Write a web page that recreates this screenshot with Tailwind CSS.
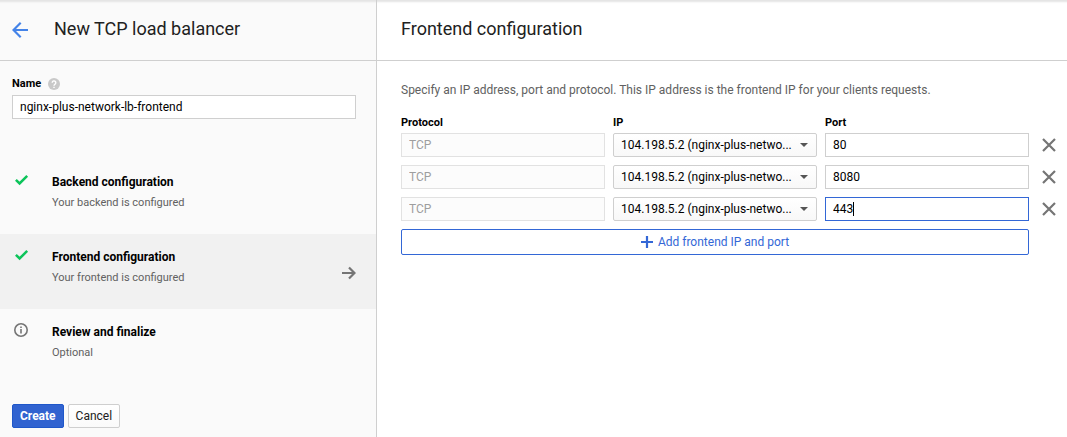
<!DOCTYPE html>
<html lang="en">
<head>
<meta charset="utf-8">
<meta name="viewport" content="width=device-width, initial-scale=1">
<title>New TCP load balancer</title>
<script src="https://cdn.jsdelivr.net/npm/@tailwindcss/browser@4"></script>
</head>
<body class="flex min-h-screen bg-white font-[Roboto,sans-serif] text-[12px] leading-4 text-black shadow-[inset_0_4px_2px_-2px_#e4e4e4]">

<aside class="flex w-[377px] shrink-0 flex-col border-r border-[#cfcfcf] bg-[#fafafa] shadow-[inset_0_4px_2px_-2px_#e4e4e4]">
  <header class="flex h-[61px] items-center border-b border-[#cfcfcf] pb-[2px] pl-3">
    <button type="button" aria-label="Back" class="mt-[2px] w-[42px]">
      <svg class="h-4 w-4" viewBox="0 0 16 16" fill="none" stroke="#4483e8" stroke-width="2.200"><path d="M16 8H1.500M8.700.8 1.500 8l7.200 7.200"/></svg>
    </button>
    <h1 class="text-[18px] leading-6 text-[#212121]">New TCP load balancer</h1>
  </header>

  <form class="flex grow flex-col">
    <div class="px-3 pt-[15px]">
      <div class="flex h-4 items-center gap-[7px]">
        <label for="name" class="text-[11px] font-bold">Name</label>
        <svg class="h-3 w-3" viewBox="0 0 12 12"><circle cx="6" cy="6" r="6" fill="#c9c9c9"/><path d="M4.200 4.700a1.800 1.800 0 1 1 2.800 1.500C6.300 6.700 6 6.900 6 7.700M6 8.700v1.200" fill="none" stroke="#fff" stroke-width="1.400"/></svg>
      </div>
      <input id="name" value="nginx-plus-network-lb-frontend" class="mt-[3px] h-6 w-[calc(100%-8px)] border border-[#cfcfcf] bg-white px-[7px] outline-none">
    </div>

    <ol class="mt-10">
      <li class="flex h-[75px] pt-[15px] pl-[14px]">
        <svg class="h-4 w-[38px] shrink-0" viewBox="0 0 38 16" fill="none" stroke="#0cc45a" stroke-width="2.500"><path d="m1.900 5.900 3.700 3.600 7.600-7.600"/></svg>
        <div><h2 class="font-bold">Backend configuration</h2><p class="mt-[5px] text-[11px] text-[#616161]">Your backend is configured</p></div>
      </li>
      <li class="flex h-[75px] bg-[#f1f1f1] pt-[15px] pr-5 pl-[14px]" aria-current="step">
        <svg class="h-4 w-[38px] shrink-0" viewBox="0 0 38 16" fill="none" stroke="#0cc45a" stroke-width="2.500"><path d="m1.900 5.900 3.700 3.600 7.600-7.600"/></svg>
        <div class="grow"><h2 class="font-bold">Frontend configuration</h2><p class="mt-[5px] text-[11px] text-[#616161]">Your frontend is configured</p></div>
        <svg class="mt-4 h-4 w-[14px]" viewBox="0 0 14 16" fill="none" stroke="#757575" stroke-width="2.200"><path d="M0 8h12.500M7 2.500 12.500 8 7 13.500"/></svg>
      </li>
      <li class="flex h-[75px] pt-[14px] pl-[14px]">
        <svg class="h-4 w-[38px] shrink-0" viewBox="0 0 38 16" fill="none" stroke="#757575" stroke-width="1.600"><circle cx="7" cy="7" r="6.200"/><path d="M7 6v4.500M7 3.600v1.500"/></svg>
        <div class="mt-px"><h2 class="font-bold">Review and finalize</h2><p class="mt-[5px] text-[11px] text-[#616161]">Optional</p></div>
      </li>
    </ol>

    <div class="mt-5 flex gap-1 px-3">
      <button type="submit" class="h-6 rounded-xs border border-[#1f57c9] bg-[#3163d0] px-[7px] font-bold text-white">Create</button>
      <button type="button" class="h-6 rounded-xs border border-[#cfcfcf] bg-linear-to-b from-white to-[#fafafa] px-[7px] text-[#212121]">Cancel</button>
    </div>
  </form>
</aside>

<main class="min-w-0 grow">
  <header class="flex h-[61px] items-center border-b border-[#cfcfcf] px-6 pb-[2px]">
    <h1 class="text-[18px] leading-6 text-[#212121]">Frontend configuration</h1>
  </header>
  <form class="pt-[21px] pr-[6px] pl-6">
    <p class="text-[#616161]">Specify an IP address, port and protocol. This IP address is the frontend IP for your clients requests.</p>
    <div class="mt-[17px] grid grid-cols-[1fr_1fr_1fr_24px] gap-2">
      <div id="h-protocol" class="-mb-[6px] text-[11px] font-bold">Protocol</div>
      <div id="h-ip" class="-mb-[6px] text-[11px] font-bold">IP</div>
      <div id="h-port" class="-mb-[6px] text-[11px] font-bold">Port</div>
      <div></div>

      <input aria-labelledby="h-protocol" disabled value="TCP" class="h-6 min-w-0 border border-[#e2e2e2] bg-[#fcfcfc] px-[7px] text-[#9e9e9e]">
      <div class="relative">
        <select aria-labelledby="h-ip" class="h-6 w-full appearance-none rounded-xs border border-[#cfcfcf] bg-linear-to-b from-white to-[#f8f8f8] pr-5 pl-[7px]"><option>104.198.5.2 (nginx-plus-netwo...</option></select>
        <svg class="pointer-events-none absolute top-[10px] right-[9px] h-1 w-2" viewBox="0 0 8 4"><path d="M0 0h8L4 4z" fill="#555"/></svg>
      </div>
      <input aria-labelledby="h-port" value="80" class="h-6 min-w-0 border border-[#cfcfcf] px-[7px] outline-none">
      <button type="button" aria-label="Remove" class="flex h-6 items-center justify-center"><svg class="h-3 w-3 overflow-visible" viewBox="0 0 12 12" stroke="#757575" stroke-width="2.200"><path d="m0 0 12 12M12 0 0 12"/></svg></button>

      <input aria-labelledby="h-protocol" disabled value="TCP" class="h-6 min-w-0 border border-[#e2e2e2] bg-[#fcfcfc] px-[7px] text-[#9e9e9e]">
      <div class="relative">
        <select aria-labelledby="h-ip" class="h-6 w-full appearance-none rounded-xs border border-[#cfcfcf] bg-linear-to-b from-white to-[#f8f8f8] pr-5 pl-[7px]"><option>104.198.5.2 (nginx-plus-netwo...</option></select>
        <svg class="pointer-events-none absolute top-[10px] right-[9px] h-1 w-2" viewBox="0 0 8 4"><path d="M0 0h8L4 4z" fill="#555"/></svg>
      </div>
      <input aria-labelledby="h-port" value="8080" class="h-6 min-w-0 border border-[#cfcfcf] px-[7px] outline-none">
      <button type="button" aria-label="Remove" class="flex h-6 items-center justify-center"><svg class="h-3 w-3 overflow-visible" viewBox="0 0 12 12" stroke="#757575" stroke-width="2.200"><path d="m0 0 12 12M12 0 0 12"/></svg></button>

      <input aria-labelledby="h-protocol" disabled value="TCP" class="h-6 min-w-0 border border-[#e2e2e2] bg-[#fcfcfc] px-[7px] text-[#9e9e9e]">
      <div class="relative">
        <select aria-labelledby="h-ip" class="h-6 w-full appearance-none rounded-xs border border-[#cfcfcf] bg-linear-to-b from-white to-[#f8f8f8] pr-5 pl-[7px]"><option>104.198.5.2 (nginx-plus-netwo...</option></select>
        <svg class="pointer-events-none absolute top-[10px] right-[9px] h-1 w-2" viewBox="0 0 8 4"><path d="M0 0h8L4 4z" fill="#555"/></svg>
      </div>
      <div class="relative">
        <input aria-labelledby="h-port" value="443" class="h-6 w-full border border-[#3367d6] px-[7px] caret-transparent outline-none">
        <span class="pointer-events-none absolute top-[5px] left-7 h-[14px] w-px bg-black"></span>
      </div>
      <button type="button" aria-label="Remove" class="flex h-6 items-center justify-center"><svg class="h-3 w-3 overflow-visible" viewBox="0 0 12 12" stroke="#757575" stroke-width="2.200"><path d="m0 0 12 12M12 0 0 12"/></svg></button>

      <button type="button" class="col-span-3 flex h-[26px] items-center justify-center gap-[5px] rounded-xs border border-[#3367d6] text-[#3367d6]">
        <svg class="h-3 w-3" viewBox="0 0 12 12" stroke="#3367d6" stroke-width="2.200"><path d="M6 0v12M0 6h12"/></svg>
        Add frontend IP and port
      </button>
    </div>
  </form>
</main>
</body>
</html>
